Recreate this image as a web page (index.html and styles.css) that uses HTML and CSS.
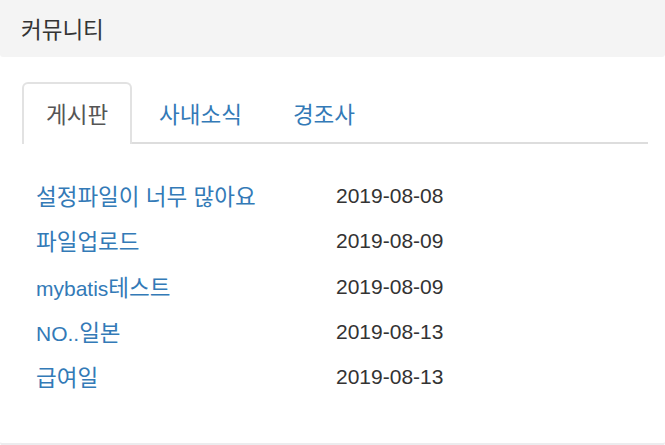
FILE: index.html
```html
<!DOCTYPE html>
<html lang="ko">
<head>
<meta charset="utf-8">
<title>커뮤니티</title>
<link rel="stylesheet" href="styles.css">
</head>
<body>
<div class="panel">
  <div class="panel-heading"><span class="ko">커뮤니티</span></div>
  <div class="panel-body">
    <ul class="nav-tabs">
      <li class="tab active"><a href="#"><span class="ko">게시판</span></a></li>
      <li class="tab"><a href="#"><span class="ko">사내소식</span></a></li>
      <li class="tab"><a href="#"><span class="ko">경조사</span></a></li>
    </ul>
    <ul class="posts">
      <li class="post"><a href="#" class="title"><span class="ko">설정파일이 너무 많아요</span></a><span class="date">2019-08-08</span></li>
      <li class="post"><a href="#" class="title"><span class="ko">파일업로드</span></a><span class="date">2019-08-09</span></li>
      <li class="post"><a href="#" class="title">mybatis<span class="ko">테스트</span></a><span class="date">2019-08-09</span></li>
      <li class="post"><a href="#" class="title">NO..<span class="ko">일본</span></a><span class="date">2019-08-13</span></li>
      <li class="post"><a href="#" class="title"><span class="ko">급여일</span></a><span class="date">2019-08-13</span></li>
    </ul>
  </div>
</div>
</body>
</html>
```
FILE: styles.css
```css
html, body {
  margin: 0;
  padding: 0;
  background: #fff;
  overflow: hidden;
}
body {
  font-family: "Liberation Sans", "Noto Sans CJK KR", sans-serif;
  font-size: 21px;
  color: #333;
  width: 665px;
  height: 445px;
}
a {
  text-decoration: none;
  color: #337ab7;
}
.ko {
  font-family: "Noto Sans CJK KR", sans-serif;
  font-size: 22.5px;
}
.panel {
  border-bottom: 3px solid #ececee;
  border-radius: 0 0 4px 4px;
}
.panel-heading {
  height: 57px;
  line-height: 57px;
  padding-left: 21px;
  background: #f4f4f4;
  color: #333;
  border-radius: 0 0 3px 3px;
}
.panel-body {
  padding: 25px 17px 44px 22px;
}
.nav-tabs {
  list-style: none;
  margin: 0;
  padding: 0;
  display: flex;
  border-bottom: 2px solid #ddd;
}
.tab {
  margin-right: 3px;
  margin-bottom: -2px;
}
.tab a {
  display: block;
  padding: 15px 22px 17px;
  line-height: 28px;
  height: 28px;
  border: 2px solid transparent;
  border-bottom: 0;
  border-radius: 6px 6px 0 0;
}
.tab.active a {
  color: #555;
  background: #fff;
  border-color: #e2e2e2;
}
.posts {
  list-style: none;
  margin: 29px 0 0 0;
  padding: 0 0 0 14px;
}
.post {
  display: grid;
  grid-template-columns: 300px auto;
  height: 45.25px;
  line-height: 45.25px;
}
.date {
  color: #333;
}
```
